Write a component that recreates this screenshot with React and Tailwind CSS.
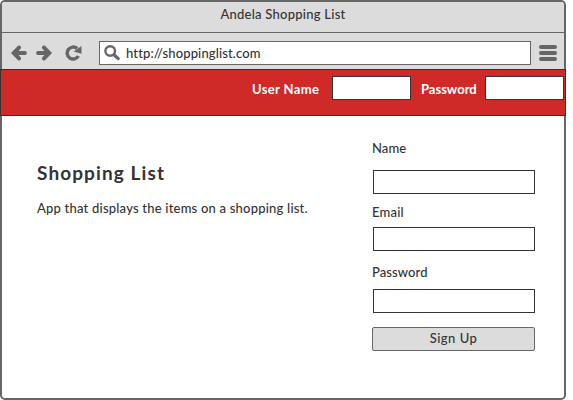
import React from "react";

function Toolbar() {
  return (
    <div className="flex h-9 items-start bg-[#dcdcdc] pl-[9px] pr-[7px] pt-2">
      <svg className="mt-[4px] h-4 w-4 shrink-0" viewBox="0 0 16 16" fill="#666" stroke="#666" strokeLinecap="round">
        <path d="M14 8H4" strokeWidth="3.8" />
        <path d="M0 8L7 0.8Q8.6 0 9.8 1.4Q10.6 2.6 9.6 3.8L5.8 8l3.8 4.2Q10.6 13.4 9.8 14.6Q8.6 16 7 15.2Z" stroke="none" />
      </svg>
      <svg className="ml-[9px] mt-[4px] h-4 w-4 shrink-0" viewBox="0 0 16 16" fill="#666" stroke="#666" strokeLinecap="round">
        <path d="M2 8h10" strokeWidth="3.8" />
        <path d="M16 8L9 0.8Q7.4 0 6.2 1.4Q5.4 2.6 6.4 3.8L10.2 8l-3.8 4.2Q5.4 13.4 6.2 14.6Q7.4 16 9 15.2Z" stroke="none" />
      </svg>
      <svg className="ml-[13px] mt-[4px] h-4 w-[17px] shrink-0" viewBox="0 0 17 16">
        <path d="M12.2 3.6A6 6 0 1 0 13.4 11" fill="none" stroke="#666" strokeWidth="3.4" />
        <path d="M16.5 1V8.8L8.6 6.4Z" fill="#666" />
      </svg>
      <div className="ml-[17px] flex h-6 w-[432px] shrink-0 items-center border border-[#666] bg-white pl-[4px]">
        <svg className="h-4 w-4 shrink-0" viewBox="0 0 16 16" fill="none" stroke="#666">
          <circle cx="6.2" cy="6" r="4.8" strokeWidth="2.4" />
          <path d="M10 9.8l4.2 3.8" strokeWidth="3.2" strokeLinecap="round" />
        </svg>
        <span className="ml-[6px] text-[13px] leading-4 tracking-[0.13px]">http://shoppinglist.com</span>
      </div>
      <div className="ml-[8px] mt-[4px] flex w-[18px] shrink-0 flex-col gap-[2px]">
        <div className="h-1 rounded-full bg-[#666]" />
        <div className="h-1 rounded-full bg-[#666]" />
        <div className="h-1 rounded-full bg-[#666]" />
      </div>
    </div>
  );
}

function Box() {
  return <div className="ml-px h-6 w-[162px] border border-[#333] bg-white" />;
}

export default function App() {
  return (
    <div className="h-[400px] w-[573px] overflow-hidden bg-white font-[Lato,'Open_Sans',sans-serif] text-[13px] font-medium leading-4 text-[#333]">
      <div className="flex h-[400px] w-[566px] flex-col rounded-[5px] border-2 border-[#666] bg-white">
        <div className="h-[31px] shrink-0 rounded-t-[3px] border-b border-[#666] bg-[#dcdcdc] pt-[4px] text-center">
          <span className="tracking-[0.25px]">Andela Shopping List</span>
        </div>
        <Toolbar />
        <div className="-mx-[2px] flex h-[47px] shrink-0 border border-[#333] bg-[#cf2a27] pt-[6px] font-bold text-white">
          <div className="ml-[251px] mt-[5px] w-[80px] whitespace-nowrap tracking-[0.35px]">User Name</div>
          <div className="h-6 w-[79px] border border-[#333] bg-white" />
          <div className="ml-[10px] mt-[5px] w-[64px] whitespace-nowrap">Password</div>
          <div className="h-6 w-[79px] border border-[#333] bg-white" />
        </div>
        <div className="flex">
          <div className="w-[370px] pl-[35px] pt-[45px]">
            <h1 className="text-[19px] font-bold leading-6 tracking-[1.1px]">Shopping List</h1>
            <p className="mt-[15px] tracking-[0.21px]">App that displays the items on a shopping list.</p>
          </div>
          <div className="w-[163px] pt-[24px]">
            <div className="mb-[14px] tracking-[0.1px]">Name</div>
            <Box />
            <div className="mb-[7px] mt-[10px] tracking-[0.2px]">Email</div>
            <Box />
            <div className="mb-[9px] mt-[13px] tracking-[0.1px]">Password</div>
            <Box />
            <div className="mt-[14px] h-6 rounded-[2px] border border-[#666] bg-[#dcdcdc] pt-[2px] text-center tracking-[0.5px]">Sign Up</div>
          </div>
        </div>
      </div>
    </div>
  );
}
